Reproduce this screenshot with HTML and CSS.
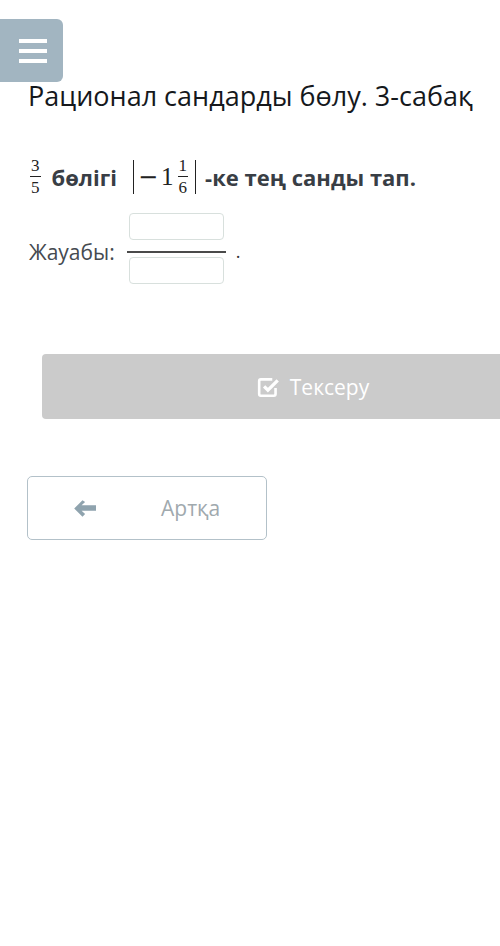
FILE: index.html
```html
<!DOCTYPE html>
<html lang="kk">
<head>
<meta charset="utf-8">
<title>Рационал сандарды бөлу</title>
<link rel="stylesheet" href="styles.css">
</head>
<body>
<div class="page">
  <div class="menu-btn">
    <span class="bar"></span><span class="bar"></span><span class="bar"></span>
  </div>
  <h1 class="title">Рационал сандарды бөлу. 3-сабақ</h1>

  <div class="question">
    <span class="frac small"><span class="num">3</span><span class="den">5</span></span>
    <span class="word">бөлігі</span>
    <span class="abs">
      <span class="minus">−</span><span class="one">1</span><span class="frac small"><span class="num">1</span><span class="den">6</span></span>
    </span>
    <span class="word">-ке тең санды тап.</span>
  </div>

  <div class="answer">
    <span class="label">Жауабы:</span>
    <span class="ans-frac">
      <span class="box"></span>
      <span class="line"></span>
      <span class="box"></span>
    </span>
    <span class="dot">.</span>
  </div>

  <div class="check-row">
    <div class="check-btn">
      <svg class="check-icon" viewBox="0 0 22 22" width="24" height="24">
        <path d="M17 12v5.5a1.5 1.5 0 0 1-1.5 1.5h-12A1.5 1.5 0 0 1 2 17.5v-12A1.5 1.5 0 0 1 3.5 4H14" fill="none" stroke="#fff" stroke-width="2.4"/>
        <path d="M6.5 10.5l3.5 3.5 9-9" fill="none" stroke="#fff" stroke-width="3"/>
      </svg>
      <span>Тексеру</span>
    </div>
  </div>

  <div class="back-btn">
    <svg class="arrow" viewBox="0 0 24 17" width="24" height="17">
      <path d="M9.5 0.3L1.2 8.5l8.3 8.2 2.6-2.6-3.5-3.3H23V5.2H8.6l3.5-3.3z" fill="#8fa3ae"/>
    </svg>
    <span>Артқа</span>
  </div>
</div>
</body>
</html>
```

FILE: styles.css
```css
html, body {
  margin: 0;
  padding: 0;
  background: #ffffff;
}
body {
  font-family: "Open Sans", "Noto Sans", sans-serif;
  overflow-x: hidden;
}
.page {
  width: 500px;
  padding-top: 19px;
}
.menu-btn {
  width: 63px;
  height: 63px;
  background: #a2b5c1;
  border-radius: 0 6px 6px 0;
  display: flex;
  flex-direction: column;
  justify-content: center;
  align-items: center;
  gap: 6px;
  box-sizing: border-box;
  padding-left: 2px;
}
.menu-btn .bar {
  display: block;
  width: 28px;
  height: 4px;
  background: #ffffff;
}
.title {
  margin: -3px 0 0 28px;
  font-size: 27px;
  font-weight: 400;
  color: #15181c;
  line-height: 34px;
}
.question {
  display: flex;
  align-items: center;
  margin: 45px 0 0 30px;
  height: 38px;
  color: #393e45;
}
.frac {
  display: inline-flex;
  flex-direction: column;
  align-items: center;
  font-family: "Liberation Serif", "DejaVu Serif", serif;
  color: #222;
}
.frac.small {
  font-size: 17px;
  line-height: 14px;
}
.frac .num {
  border-bottom: 1px solid #222;
  padding: 0 1px 3px;
}
.frac .den {
  padding-top: 4px;
}
.word {
  font-weight: 700;
  font-size: 22px;
  margin-left: 11px;
}
.abs {
  display: inline-flex;
  align-items: center;
  margin-left: 16px;
  border-left: 1px solid #222;
  border-right: 1px solid #222;
  height: 34px;
  padding: 0 7px 0 4px;
  font-family: "Liberation Serif", "DejaVu Serif", serif;
  color: #222;
}
.abs .minus {
  font-family: "DejaVu Serif", serif;
  font-size: 24px;
}
.abs .one {
  font-size: 25px;
  margin: 0 4px 0 3px;
}
.abs + .word {
  margin-left: 9px;
}
.answer {
  display: flex;
  align-items: center;
  margin: 17px 0 0 29px;
}
.label {
  font-size: 21px;
  color: #454a50;
  margin-top: 6px;
}
.ans-frac {
  display: inline-flex;
  flex-direction: column;
  align-items: center;
  margin-left: 12px;
}
.box {
  display: block;
  width: 95px;
  height: 27px;
  border: 1.5px solid #d8e0dd;
  border-radius: 4px;
  box-sizing: border-box;
}
.line {
  display: block;
  width: 99px;
  height: 2px;
  background: #4a4a4a;
  margin: 11px 0 4px;
}
.dot {
  font-size: 18px;
  color: #333;
  margin-left: 10px;
  margin-top: 4px;
}
.check-row {
  margin: 70px 0 0 42px;
}
.check-btn {
  width: 542px;
  height: 65px;
  background: #cbcbcb;
  border-radius: 4px;
  display: flex;
  align-items: center;
  justify-content: center;
  gap: 9px;
  color: #ffffff;
  font-size: 21px;
}
.check-icon {
  margin-top: 0;
}
.back-btn {
  margin: 57px 0 0 27px;
  width: 240px;
  height: 64px;
  box-sizing: border-box;
  border: 1px solid #b3c1c9;
  border-radius: 5px;
  display: flex;
  align-items: center;
  padding-left: 45px;
  color: #a0a9ae;
  font-size: 21px;
}
.back-btn span {
  margin-left: 64px;
}
```
